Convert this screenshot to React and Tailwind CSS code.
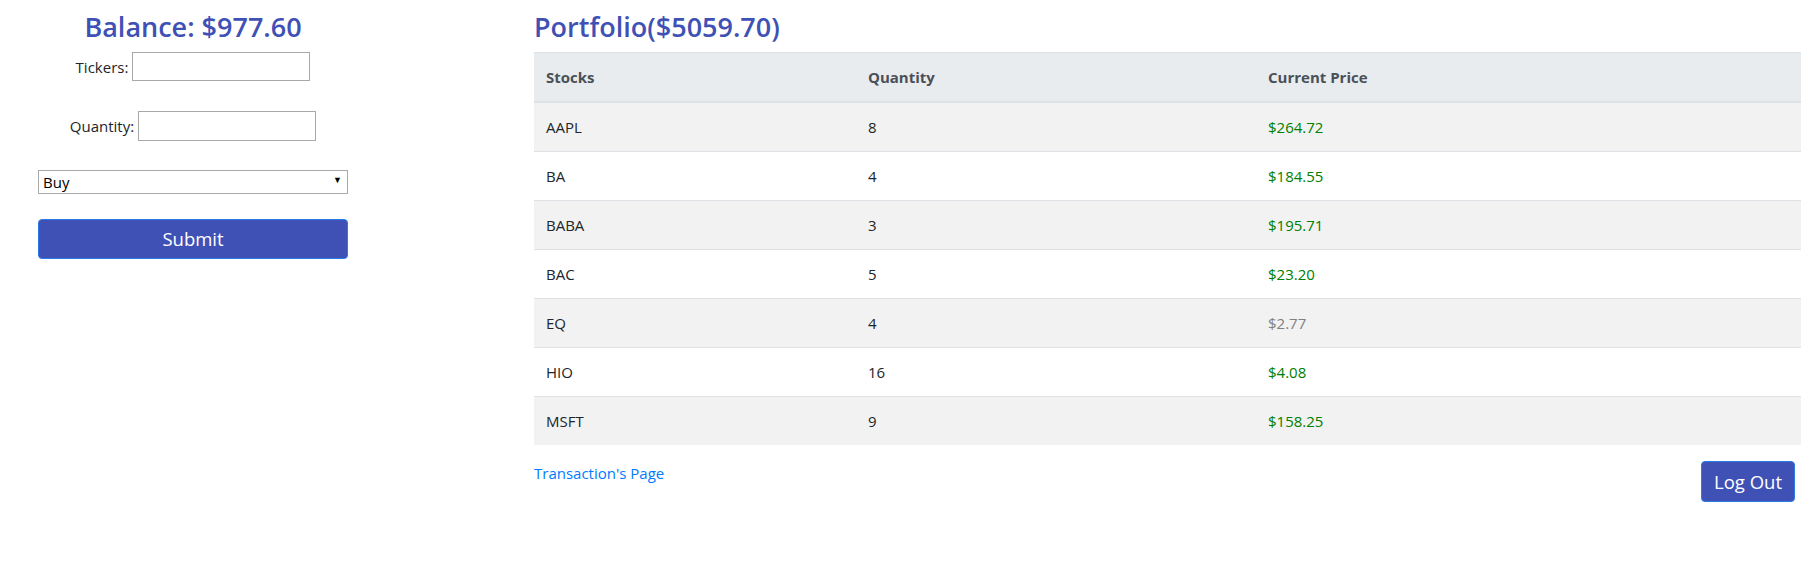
const holdings = [
  { ticker: 'AAPL', qty: 8, price: '$264.72', tone: 'up' },
  { ticker: 'BA', qty: 4, price: '$184.55', tone: 'up' },
  { ticker: 'BABA', qty: 3, price: '$195.71', tone: 'up' },
  { ticker: 'BAC', qty: 5, price: '$23.20', tone: 'up' },
  { ticker: 'EQ', qty: 4, price: '$2.77', tone: 'flat' },
  { ticker: 'HIO', qty: 16, price: '$4.08', tone: 'up' },
  { ticker: 'MSFT', qty: 9, price: '$158.25', tone: 'up' },
];

export default function App() {
  return (
    <div className="flex min-h-[573px] bg-white font-['Segoe_UI','Open_Sans',sans-serif] text-[15px] leading-[24px] text-[#212529]">
      {/* Trade form */}
      <div className="w-[386px] shrink-0 flex flex-col items-center pt-[10px]">
        <h3 className="text-[27px] leading-[34px] font-semibold text-[#3f51b5] mb-[8px]">
          Balance: $977.60
        </h3>
        <div className="flex items-center gap-[4px]">
          <label>Tickers:</label>
          <input type="text" className="w-[178px] h-[29px] border border-[#a9a9a9] bg-white" />
        </div>
        <div className="flex items-center gap-[4px] mt-[30px]">
          <label>Quantity:</label>
          <input type="text" className="w-[178px] h-[30px] border border-[#a9a9a9] bg-white" />
        </div>
        <div className="relative w-[310px] mt-[29px]">
          <select className="appearance-none w-full h-[24px] border border-[#a9a9a9] bg-white pl-[4px] text-[15px] leading-[20px] text-black">
            <option>Buy</option>
            <option>Sell</option>
          </select>
          <span className="pointer-events-none absolute right-[6px] top-[5px] text-[9px] leading-none text-black">▼</span>
        </div>
        <button className="w-[310px] h-[40px] mt-[25px] rounded-[4px] border border-[#2a7be4] bg-[#3f51b5] text-white text-[18.5px]">
          Submit
        </button>
      </div>

      {/* Portfolio */}
      <div className="flex-1 ml-[148px] mr-[2px] pt-[10px]">
        <h3 className="text-[27px] leading-[34px] font-semibold text-[#3f51b5] mb-[8px]">
          Portfolio($5059.70)
        </h3>
        <table className="w-full border-collapse text-left">
          <thead>
            <tr className="bg-[#e9ecef] text-[#495057]">
              <th className="w-[322px] p-[12px] font-bold border-t border-b-2 border-[#dee2e6]">Stocks</th>
              <th className="w-[400px] p-[12px] font-bold border-t border-b-2 border-[#dee2e6]">Quantity</th>
              <th className="p-[12px] font-bold border-t border-b-2 border-[#dee2e6]">Current Price</th>
            </tr>
          </thead>
          <tbody>
            {holdings.map((h, i) => (
              <tr key={h.ticker} className={i % 2 === 0 ? 'bg-[#f2f2f2]' : 'bg-white'}>
                <td className={`p-[12px] ${i > 0 ? 'border-t border-[#dee2e6]' : ''}`}>{h.ticker}</td>
                <td className={`p-[12px] ${i > 0 ? 'border-t border-[#dee2e6]' : ''}`}>{h.qty}</td>
                <td
                  className={`p-[12px] ${i > 0 ? 'border-t border-[#dee2e6]' : ''} ${
                    h.tone === 'up' ? 'text-[#008000]' : 'text-[#808080]'
                  }`}
                >
                  {h.price}
                </td>
              </tr>
            ))}
          </tbody>
        </table>
        <div className="flex justify-between items-start mt-[16px]">
          <a href="#" className="text-[#007bff] leading-[24px]">Transaction's Page</a>
          <button className="mr-[6px] rounded-[4px] border border-[#2a7be4] bg-[#3f51b5] text-white text-[18.5px] leading-[29px] px-[12px] py-[5px]">
            Log Out
          </button>
        </div>
      </div>
    </div>
  );
}
